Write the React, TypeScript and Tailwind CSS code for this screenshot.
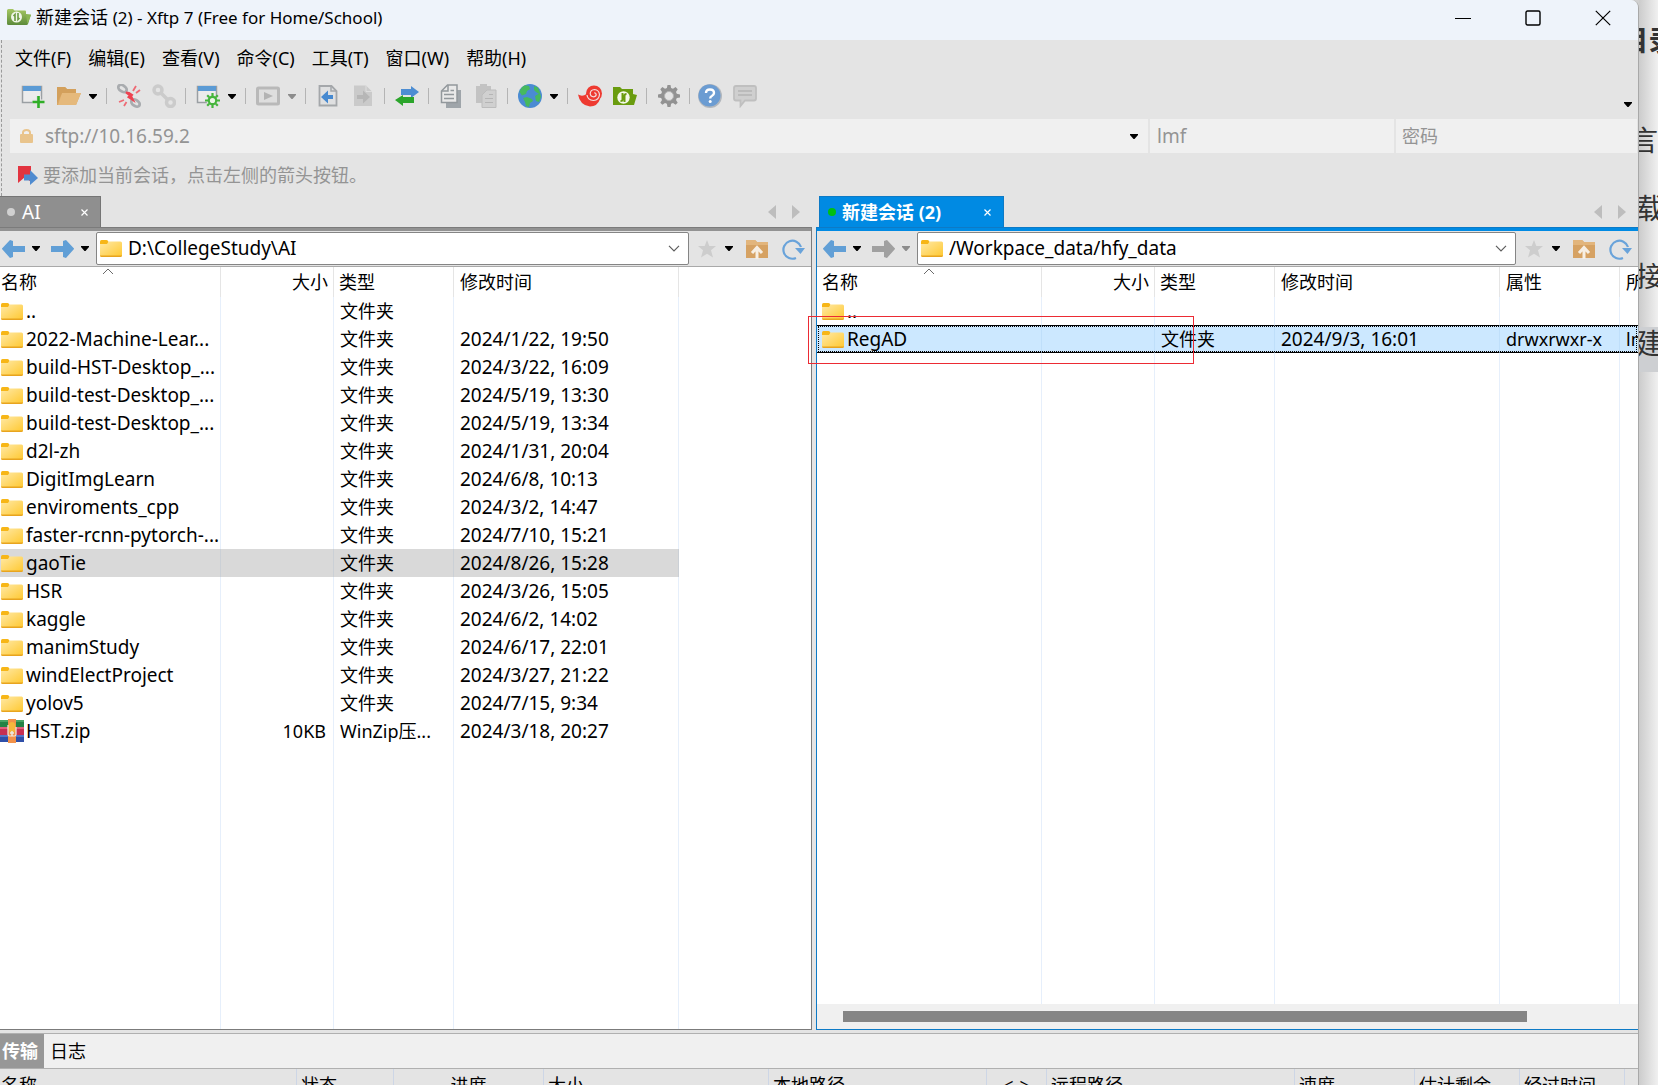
import type { ReactNode } from "react";
import clsx from "clsx";

type FileRow = {
    name: string;
    size?: string;
    type?: string;
    modified?: string;
    attr?: string;
    owner?: string;
    zip?: boolean;
    selected?: boolean;
};

const localFiles: FileRow[] = [
    { name: "..", type: "文件夹" },
    { name: "2022-Machine-Lear...", type: "文件夹", modified: "2024/1/22, 19:50" },
    { name: "build-HST-Desktop_...", type: "文件夹", modified: "2024/3/22, 16:09" },
    { name: "build-test-Desktop_...", type: "文件夹", modified: "2024/5/19, 13:30" },
    { name: "build-test-Desktop_...", type: "文件夹", modified: "2024/5/19, 13:34" },
    { name: "d2l-zh", type: "文件夹", modified: "2024/1/31, 20:04" },
    { name: "DigitImgLearn", type: "文件夹", modified: "2024/6/8, 10:13" },
    { name: "enviroments_cpp", type: "文件夹", modified: "2024/3/2, 14:47" },
    { name: "faster-rcnn-pytorch-...", type: "文件夹", modified: "2024/7/10, 15:21" },
    { name: "gaoTie", type: "文件夹", modified: "2024/8/26, 15:28", selected: true },
    { name: "HSR", type: "文件夹", modified: "2024/3/26, 15:05" },
    { name: "kaggle", type: "文件夹", modified: "2024/6/2, 14:02" },
    { name: "manimStudy", type: "文件夹", modified: "2024/6/17, 22:01" },
    { name: "windElectProject", type: "文件夹", modified: "2024/3/27, 21:22" },
    { name: "yolov5", type: "文件夹", modified: "2024/7/15, 9:34" },
    { name: "HST.zip", size: "10KB", type: "WinZip压...", modified: "2024/3/18, 20:27", zip: true },
];

const remoteFiles: FileRow[] = [
    { name: ".." },
    { name: "RegAD", type: "文件夹", modified: "2024/9/3, 16:01", attr: "drwxrwxr-x", owner: "lmf", selected: true },
];

const menus = ["文件(F)", "编辑(E)", "查看(V)", "命令(C)", "工具(T)", "窗口(W)", "帮助(H)"];

const transferColumns = [
    { label: "名称", col: "w-[297px]" },
    { label: "状态", col: "w-[97px]" },
    { label: "进度", col: "w-[150px]", center: true },
    { label: "大小", col: "w-[225px]" },
    { label: "本地路径", col: "w-[218px]" },
    { label: "<->", col: "w-[60px]", center: true },
    { label: "远程路径", col: "w-[248px]" },
    { label: "速度", col: "w-[120px]" },
    { label: "估计剩余", col: "w-[105px]" },
    { label: "经过时间", col: "w-[105px]" },
    { label: "", col: "" },
];

function Caret({ className }: { className?: string }) {
    return (
        <svg viewBox="0 0 8 5" className={clsx("h-[5px] w-2 shrink-0 fill-current", className)} aria-hidden="true">
            <path d="M0 0h8v1L4.500 5h-1L0 1z" />
        </svg>
    );
}

function FolderIcon() {
    return (
        <svg viewBox="0 0 22 17" className="h-[17px] w-[22px] shrink-0" aria-hidden="true">
            <path d="M0 1.500Q0 0 1.500 0H6.500Q8 0 8.300 1.500V5H0z" fill="#f7b617" />
            <path d="M0 4H7L8.500 1.500H20.500Q22 1.500 22 3V16H0z" fill="url(#folder-fill)" />
            <path d="M0 15.500Q0 17 1.500 17H20.500Q22 17 22 15.500z" fill="#e8a41e" />
        </svg>
    );
}

function ZipIcon() {
    return (
        <svg viewBox="0 0 24 24" className="size-6 shrink-0" aria-hidden="true">
            <path d="M0 1h24v7H0z" fill="#238245" />
            <path d="M0 1h24v2H0z" fill="#46a264" />
            <path d="M0 8h24v8H0z" fill="#c72f52" />
            <path d="M0 8h24v2H0z" fill="#e0607c" />
            <path d="M0 16h24v7H0z" fill="#2f4fa8" />
            <path d="M0 16h24v2H0z" fill="#5476c9" />
            <path d="M8 0h8v24H8z" fill="#f2924a" />
            <path d="M8 6v9.500q0 1.500 1.500 1.500h5q1.500 0 1.500-1.500V8" fill="none" stroke="#f3ece0" strokeWidth="1.200" />
            <rect x="9" y="3" width="6" height="11" rx="3" fill="#f6b73c" />
            <path d="M12 12v5M10 14h4" stroke="#e9e9e9" strokeWidth="1.500" />
        </svg>
    );
}

function ArrowIcon({ right, className }: { right?: boolean; className: string }) {
    return (
        <svg viewBox="0 0 23 18" className={clsx("h-[18px] w-[23px] fill-current", className)} aria-hidden="true">
            {right ? <path d="M0 6h12V1l3-1 8 8.500V9l-8 9-3-1v-5H0z" /> : <path d="M23 6H11V1L8 0 0 8.500V9l8 9 3-1v-5h12z" />}
        </svg>
    );
}

function ToolButton({ label, children }: { label: string; children: ReactNode }) {
    return (
        <button type="button" aria-label={label} title={label} className="size-6 shrink-0">
            <svg viewBox="0 0 24 24" className="size-6" aria-hidden="true">
                {children}
            </svg>
        </button>
    );
}

function Divider() {
    return <span className="mr-[10px] ml-[9px] h-4 w-px bg-[#b4b4b4]" />;
}

function MenuCaret({ label, disabled, tight }: { label: string; disabled?: boolean; tight?: boolean }) {
    return (
        <button
            type="button"
            aria-label={label}
            disabled={disabled}
            className={clsx("flex h-6 items-center", tight ? "ml-[7px]" : "ml-2", disabled ? "text-[#8c8c8c]" : "text-black")}
        >
            <Caret />
        </button>
    );
}

function WindowWithBar() {
    return (
        <>
            <path d="M1.500 2.500h19v16h-19z" fill="#ececec" stroke="#9a9fa3" strokeWidth="1.500" />
            <path d="M2 2h18v5H2z" fill="#5b9bd5" />
        </>
    );
}

const gearPath =
    "M10.500 1h3l.6 3 1.900.8 2.600-1.700 2.100 2.100L19 7.900l.8 1.900 3.200.7v3l-3.200.6-.8 1.900 1.700 2.700-2.100 2.100-2.600-1.800-1.900.8-.6 3.200h-3l-.6-3.200-1.900-.8-2.600 1.800-2.100-2.100L5 16l-.8-1.900L1 13.500v-3l3.200-.7L5 7.900 3.300 5.200l2.100-2.100L8 4.800 9.900 4z";

function Toolbar() {
    return (
        <div className="flex h-[43px] items-start justify-between pr-1.5">
            <div className="flex items-center pt-2 pl-[19px]">
                <ToolButton label="新建会话">
                    <WindowWithBar />
                    <path d="M17.500 12v12M11.500 18h12" stroke="#e4e4e4" strokeWidth="5" />
                    <path d="M17.500 12v12M11.500 18h12" stroke="#2fae27" strokeWidth="2.600" />
                </ToolButton>
                <span className="w-3" />
                <ToolButton label="打开">
                    <path d="M0 3h8l2 2h9v4h5l-5 12H0z" fill="#d9a866" />
                    <path d="M5 9h19l-5 12H1z" fill="#e5b97c" />
                    <path d="M0 3h8l2 2h9v4H5L0 19z" fill="#d3a05c" />
                </ToolButton>
                <MenuCaret label="打开选项" />
                <Divider />
                <ToolButton label="断开">
                    <g fill="none" stroke="#a9acaf" strokeWidth="2.800">
                        <ellipse cx="5.500" cy="4.500" rx="4.600" ry="3" transform="rotate(35 5.500 4.500)" />
                        <ellipse cx="18.500" cy="19" rx="4.600" ry="3" transform="rotate(35 18.500 19)" />
                    </g>
                    <path d="M9 8.500l4 3-1.500 1.500 4.500 3-2-4 1-1-3-2z" fill="#ee4250" stroke="#ee4250" strokeWidth="2" />
                    <path d="M16 7l3-5M19 9l4-3M7 16l-5 2M9.500 18l-2.500 4" stroke="#ee6a74" strokeWidth="1.800" />
                </ToolButton>
                <span className="w-[11px]" />
                <ToolButton label="重新连接">
                    <g fill="none" stroke="#cbcbcb" strokeWidth="3.500">
                        <circle cx="6" cy="6" r="4" />
                        <circle cx="18.500" cy="18.500" r="4" />
                        <path d="M8.500 8.500l7.500 7.500" />
                    </g>
                </ToolButton>
                <Divider />
                <ToolButton label="属性">
                    <WindowWithBar />
                    <circle cx="16.500" cy="16.500" r="6" fill="#e4e4e4" />
                    <circle cx="16.500" cy="16.500" r="3.700" fill="#eaf5e6" stroke="#45b53c" strokeWidth="2.200" />
                    <path d="M16.500 9v3M16.500 21v3M9 16.500h3M21 16.500h3M11.200 11.200l2 2M19.800 19.800l2 2M21.800 11.200l-2 2M13.200 19.800l-2 2" stroke="#45b53c" strokeWidth="2.200" />
                </ToolButton>
                <MenuCaret label="属性选项" />
                <Divider />
                <ToolButton label="运行">
                    <rect x="1.500" y="4" width="21" height="16" rx="1" fill="#dedede" stroke="#b9b9b9" strokeWidth="3" />
                    <path d="M8 8v8l9-4z" fill="#b3b3b3" />
                </ToolButton>
                <MenuCaret label="运行选项" disabled />
                <Divider />
                <ToolButton label="下载">
                    <path d="M3.500 2h12l5 5v14.500h-17z" fill="#dfe0e1" stroke="#a4a7aa" strokeWidth="1.800" />
                    <path d="M15 2v5h5" fill="none" stroke="#a4a7aa" strokeWidth="1.500" />
                    <path d="M5 13l7-6.500V11h5v4h-5v4.500z" fill="#4689d0" />
                </ToolButton>
                <span className="w-[11px]" />
                <ToolButton label="上传">
                    <path d="M3 1.500h12l6 6V22H3z" fill="#cacaca" />
                    <path d="M15 1.500v6h6" fill="none" stroke="#dedede" />
                    <path d="M19 13l-7-6.500V11H6v4h6v4.500z" fill="#b6b6b6" />
                </ToolButton>
                <Divider />
                <ToolButton label="同步">
                    <path d="M6 5h10V2l8 6-8 6v-3H6z" fill="#4d8dd2" />
                    <path d="M19 13H8v-2l-8 5 8 6v-3h11z" fill="#2ba52b" />
                </ToolButton>
                <Divider />
                <ToolButton label="复制">
                    <path d="M7 6h15v18H7z" fill="#9fa5aa" />
                    <path d="M8.500 1H18v17.500H2.500V7z" fill="#e9e9e9" stroke="#92989c" strokeWidth="1.500" />
                    <path d="M9 1v6H3M5 10.500h10M5 14.500h10M11.500 6.500H15" fill="none" stroke="#92989c" strokeWidth="1.500" />
                </ToolButton>
                <span className="w-[11px]" />
                <ToolButton label="粘贴">
                    <path d="M2 2h4V0h7v2h4v17H2z" fill="#c3c3c3" />
                    <path d="M13 6h9v17.500H8V11z" fill="#d0d0d0" stroke="#bcbcbc" />
                    <path d="M11 14.500h8M11 18.500h8M15 10.500h4" stroke="#b5b5b5" />
                </ToolButton>
                <Divider />
                <ToolButton label="语言">
                    <circle cx="12" cy="12" r="12" fill="#4a8bd3" />
                    <path d="M7 1.200 11 2l1 3-3 2-1 3-4 1.500L1.500 8Q3 3 7 1.200zM16 2l4 1.500 2 5-1 1.500-3-2-2-2zM17 12l5-3 1 4-2 5-3-1zM5 14l4-1 5 2 1 2-3 2-1 4-3-1-1-4z" fill="#46b95e" />
                </ToolButton>
                <MenuCaret label="语言选项" />
                <Divider />
                <ToolButton label="Xshell">
                    <circle cx="16" cy="9.500" r="8" fill="#ee3a31" />
                    <path d="M0 10.500q4.500 2.500 8.500-.5L22 15q-2.500 7.500-10 7.500Q2 21.500 0 10.500z" fill="#ee3a31" />
                    <path
                        d="M9 11q.5 5 6.500 5.500 5.500-.5 6-6-.5-4.500-5-5-4 .3-4.300 4 .3 3.300 3.600 3.300 2.400-.3 2.400-2.500-.4-1.600-2-1.400"
                        fill="none"
                        stroke="#f3dedd"
                        strokeWidth="1.200"
                    />
                    <path d="M21 1.500L24 0v5z" fill="#e4e4e4" />
                </ToolButton>
                <span className="w-[11px]" />
                <ToolButton label="Xftp">
                    <path d="M0 3h7l2 2h11v5l4 1-3 10H0z" fill="#6a9c0f" />
                    <circle cx="10.500" cy="13.500" r="6.200" fill="#f4f8ea" />
                    <path d="M9.500 9v6.500q0 1.500-2 1.500M11.500 18v-6.500q0-1.500 2-1.500" fill="none" stroke="#6a9c0f" strokeWidth="2" />
                </ToolButton>
                <Divider />
                <ToolButton label="选项">
                    <path d={gearPath} fill="#929292" />
                    <circle cx="12" cy="12" r="4.500" fill="#e4e4e4" stroke="#b4b4b4" />
                </ToolButton>
                <span className="mx-2 h-4 w-px bg-[#b4b4b4]" />
                <ToolButton label="帮助">
                    <circle cx="12" cy="12" r="12" fill="#b2b7bd" />
                    <circle cx="11.500" cy="11.500" r="11" fill="#6b9cd2" />
                    <path d="M8 9q0-3.500 4-3.500T16 9q0 1.800-2.200 3-1.600.8-1.600 2.500" fill="none" stroke="#fff" strokeWidth="2.400" />
                    <circle cx="12.200" cy="17.500" r="1.500" fill="#fff" />
                </ToolButton>
                <span className="w-[11px]" />
                <ToolButton label="反馈">
                    <path d="M3 2h18q2 0 2 2v10.500q0 2-2 2H12L7.500 22v-5.500H3q-2 0-2-2V4q0-2 2-2z" fill="#cfcfcf" stroke="#bfbfbf" strokeWidth="1.800" />
                    <path d="M5 7h14M5 11h14" stroke="#b5b5b5" strokeWidth="1.500" />
                </ToolButton>
            </div>
            <button type="button" aria-label="工具栏选项" className="pt-[26px]">
                <Caret />
            </button>
        </div>
    );
}

function AddressBar() {
    return (
        <form className="flex h-[34px] gap-0.5 pr-px pl-2 text-[19px] text-[#949494]">
            <div className="flex min-w-0 flex-1 items-center bg-[#f0f0f0] pr-[10px] pl-[10px]">
                <svg viewBox="0 0 13 14" className="mr-3 h-[14px] w-[13px] shrink-0" aria-hidden="true">
                    <path d="M3 6V3.500Q3 1 6.500 1T10 3.500V6" fill="none" stroke="#e9c48c" strokeWidth="2" />
                    <rect y="5" width="13" height="9" rx="1" fill="#e9c48c" />
                </svg>
                <input aria-label="主机" defaultValue="sftp://10.16.59.2" className="min-w-0 flex-1 bg-transparent outline-none" />
                <button type="button" aria-label="历史地址" className="text-black">
                    <Caret />
                </button>
            </div>
            <input aria-label="用户名" defaultValue="lmf" className="w-[244px] bg-[#f0f0f0] pl-[7px] outline-none" />
            <input aria-label="密码" type="text" placeholder="密码" className="w-[241px] bg-[#f0f0f0] pl-1.5 text-lg outline-none placeholder:text-[#949494]" />
        </form>
    );
}

function PaneNav({ path, remote }: { path: string; remote?: boolean }) {
    return (
        <div className={clsx("flex h-9 shrink-0 items-center border-b border-[#a9a9a9] bg-[#e4e4e4] pr-1.5", remote ? "pl-1.5" : "pl-0.5")}>
            <button type="button" aria-label="后退">
                <ArrowIcon className="text-[#619fd6]" />
            </button>
            <MenuCaret label="后退历史" tight />
            <button type="button" aria-label="前进" disabled={remote} className="ml-[11px]">
                <ArrowIcon right className={remote ? "text-[#a0a0a0]" : "text-[#619fd6]"} />
            </button>
            <MenuCaret label="前进历史" disabled={remote} tight />
            <div className="relative ml-[7px] flex h-[33px] min-w-0 flex-1 items-center rounded-xs border border-[#858585] bg-white pl-[3px]">
                <FolderIcon />
                <select aria-label="路径" className="h-full min-w-0 flex-1 appearance-none bg-transparent pl-1.5 text-[19px] outline-none">
                    <option>{path}</option>
                </select>
                <svg viewBox="0 0 12 7" className="pointer-events-none absolute right-2 h-[7px] w-3" aria-hidden="true">
                    <path d="M1 .8l5 5 5-5" fill="none" stroke="#5c5c5c" strokeWidth="1.200" />
                </svg>
            </div>
            <button type="button" aria-label="收藏" className="ml-2">
                <svg viewBox="0 0 20 20" className="size-5" aria-hidden="true">
                    <path d="M10 1l2.300 6H19l-5 4.300 2 7.200-6-3.800-6 3.800 2-7.200L1 7h6.700z" fill="#cdcdcd" />
                </svg>
            </button>
            <MenuCaret label="收藏夹" />
            <button type="button" aria-label="上级目录" className="ml-[13px]">
                <svg viewBox="0 0 22 20" className="h-5 w-[22px]" aria-hidden="true">
                    <path d="M0 1h9l2 2h11v16H0z" fill="#d6a263" />
                    <path d="M0 1h9l2 2h11v3H0z" fill="#e2b57c" />
                    <path d="M11 20v-9M6 14l5-5.500 5 5.500" fill="none" stroke="#f7efe4" strokeWidth="3" />
                </svg>
            </button>
            <button type="button" aria-label="刷新" className="ml-[13px]">
                <svg viewBox="0 0 24 22" className="h-[22px] w-6" aria-hidden="true">
                    <path d="M15 20A9 9 0 1 1 20 9" fill="none" stroke="#69a3da" strokeWidth="2.200" />
                    <path d="M14 10h10l-4.500 6z" fill="#69a3da" />
                </svg>
            </button>
        </div>
    );
}

function FileTable({ rows, remote }: { rows: FileRow[]; remote?: boolean }) {
    const headCell = "relative h-[30px] border-r border-[#e5e5e5] p-0 font-normal";
    const columns = remote ? 6 : 5;
    return (
        <table className="h-full w-full table-fixed border-separate border-spacing-0 text-lg leading-6 whitespace-nowrap">
            <colgroup>
                <col className={remote ? "w-[225px]" : "w-[221px]"} />
                <col className="w-[113px]" />
                <col className="w-[120px]" />
                <col className="w-[225px]" />
                {remote && <col className="w-[120px]" />}
                <col />
            </colgroup>
            <thead>
                <tr className="text-left">
                    <th className={clsx(headCell, remote ? "pl-[5px]" : "pl-px")}>
                        名称
                        <svg viewBox="0 0 12 7" className={clsx("absolute top-px left-1/2 h-[7px] w-3", remote ? "-ml-1.5" : "-ml-2")} aria-hidden="true">
                            <path d="M1 6l5-5 5 5" fill="none" stroke="#6b6b6b" />
                        </svg>
                    </th>
                    <th className={clsx(headCell, "pr-[5px] text-right")}>大小</th>
                    <th className={clsx(headCell, "pl-[5px]")}>类型</th>
                    <th className={clsx(headCell, "pl-1.5")}>修改时间</th>
                    {remote && <th className={clsx(headCell, "pl-1.5")}>属性</th>}
                    <th className="h-[30px] overflow-hidden p-0 pl-1.5 font-normal">{remote && "所有者"}</th>
                </tr>
            </thead>
            <tbody>
                {rows.map((row, i) => {
                    const focus = remote && row.selected;
                    const cell = clsx(
                        "h-7 overflow-hidden border-r p-0",
                        row.selected ? (remote ? "border-r-[#bfdffa]" : "border-r-[#cbd0d6] bg-[#d9d9d9]") : "border-r-[#e6effb]",
                        focus && "border-y border-y-black bg-[#cce8ff]"
                    );
                    return (
                        <tr key={i} className={clsx(focus && "outline-1 -outline-offset-2 outline-black outline-dotted")}>
                            <td className={cell}>
                                <div className={clsx("flex items-center text-[19px]", row.zip ? "gap-0.5" : "gap-[3px]", remote ? "pl-[5px]" : !row.zip && "pl-px")}>
                                    {row.zip ? <ZipIcon /> : <FolderIcon />}
                                    <span>{row.name}</span>
                                </div>
                            </td>
                            <td className={clsx(cell, "pr-[7px] text-right")}>{row.size}</td>
                            <td className={clsx(cell, "pl-1.5")}>{row.type}</td>
                            <td className={clsx(cell, "pl-1.5 text-[19px]")}>{row.modified}</td>
                            {remote && <td className={clsx(cell, "pl-1.5")}>{row.attr}</td>}
                            <td className={clsx("overflow-hidden p-0 pl-1.5", focus && "border-y border-black bg-[#cce8ff]")}>{row.owner}</td>
                        </tr>
                    );
                })}
                <tr aria-hidden="true">
                    {Array.from({ length: columns }, (_, i) => (
                        <td key={i} className={clsx("p-0", i < columns - 1 && "border-r border-[#e6effb]")} />
                    ))}
                </tr>
            </tbody>
        </table>
    );
}

function Pane({ title, path, rows, remote }: { title: string; path: string; rows: FileRow[]; remote?: boolean }) {
    return (
        <section className="relative flex min-h-0 min-w-0 flex-col">
            <div className="flex h-[31px] shrink-0 items-center justify-between pr-3">
                <div
                    className={clsx(
                        "flex h-full items-center border-t border-r text-white",
                        remote ? "ml-[3px] w-[185px] border-l border-[#0d7ac6] bg-[#008ae3] pr-3 pl-2" : "w-[101px] border-[#757575] bg-[#8f8f8f] pr-3 pl-[7px]"
                    )}
                >
                    <span className={clsx("size-2 rounded-full", remote ? "bg-[#00bf13]" : "bg-[#d0d0d0]")} />
                    <button type="button" className={clsx("flex-1 text-left leading-7 whitespace-nowrap", remote ? "pl-1.5 text-lg font-bold" : "pl-[7px] text-[19px]")}>
                        {title}
                    </button>
                    <button type="button" aria-label="关闭标签">
                        <svg viewBox="0 0 7 7" className="size-[7px]" aria-hidden="true">
                            <path d="M.5.5l6 6M6.500.5l-6 6" stroke="#fff" strokeWidth="1.200" />
                        </svg>
                    </button>
                </div>
                <div className="flex gap-4 text-[#bdbdbd]">
                    <button type="button" aria-label="向左滚动标签">
                        <svg viewBox="0 0 8 14" className="h-[14px] w-2 fill-current" aria-hidden="true">
                            <path d="M8 0v14L0 7z" />
                        </svg>
                    </button>
                    <button type="button" aria-label="向右滚动标签">
                        <svg viewBox="0 0 8 14" className="h-[14px] w-2 fill-current" aria-hidden="true">
                            <path d="M0 0v14l8-7z" />
                        </svg>
                    </button>
                </div>
            </div>
            <div className={clsx("flex min-h-0 flex-1 flex-col border-t border-b bg-white", remote ? "border-l border-[#0d7ac6]" : "border-r border-[#7b7b7b]")}>
                <div className={clsx("h-[3px] shrink-0", remote ? "bg-[#008ae3]" : "bg-[#929292]")} />
                <PaneNav path={path} remote={remote} />
                <div className="min-h-0 flex-1 overflow-hidden">
                    <FileTable rows={rows} remote={remote} />
                </div>
                {remote && (
                    <div className="h-[25px] shrink-0 bg-[#f0f0f0] pt-[7px] pr-[111px] pl-[26px]">
                        <div className="h-[11px] bg-[#858585]" />
                    </div>
                )}
            </div>
            {remote && <div className="pointer-events-none absolute top-[120px] -left-2 h-12 w-[386px] border border-[#ec2b34]" />}
        </section>
    );
}

function TransferPanel() {
    return (
        <section className="mt-[3px] shrink-0 border-t border-[#b0b0b0]">
            <div className="flex h-[35px] border-b border-[#b0b0b0] bg-[#f0f0f0] text-lg">
                <button type="button" className="w-11 bg-[#979797] pr-1 font-bold whitespace-nowrap text-white">传输</button>
                <button type="button" className="px-1.5">日志</button>
            </div>
            <div className="h-4 overflow-hidden">
                <table className="w-full table-fixed border-separate border-spacing-0 text-lg leading-7 whitespace-nowrap">
                    <colgroup>
                        {transferColumns.map((c, i) => (
                            <col key={i} className={c.col} />
                        ))}
                    </colgroup>
                    <thead>
                        <tr>
                            {transferColumns.map((c, i) => (
                                <th
                                    key={i}
                                    className={clsx(
                                        "h-8 p-0 font-normal",
                                        c.label && "border-r border-[#cdd6e6]",
                                        c.center ? "text-center" : i === 0 ? "pl-px text-left" : "pl-1 text-left"
                                    )}
                                >
                                    {c.label}
                                </th>
                            ))}
                        </tr>
                    </thead>
                </table>
            </div>
        </section>
    );
}

// The article that shows past the right edge of the window
function PageBehind() {
    return (
        <aside className="w-[19px] shrink-0 overflow-hidden bg-linear-to-r from-[#cccccc] to-[#f0f0f0] text-[28px] whitespace-nowrap text-[#333]">
            <div className="flex h-20 items-center justify-center font-bold">目录</div>
            <div className="mt-[26px] flex h-[68px] items-center justify-end">言</div>
            <div className="-ml-[3px] flex h-[68px] items-center">载</div>
            <div className="-ml-[3px] flex h-[68px] items-center">接</div>
            <div className="mt-[17px] h-[45px] bg-[#cdcfd2] leading-8">
                <span className="-ml-[3px]">建</span>
            </div>
        </aside>
    );
}

export default function App() {
    return (
        <div className="flex h-screen overflow-hidden bg-[#d0d0d0] font-['Noto_Sans','Noto_Sans_CJK_SC',sans-serif] text-black">
            <svg className="absolute size-0" aria-hidden="true">
                <linearGradient id="folder-fill" x1="0" y1="0" x2="1" y2="1">
                    <stop offset="0" stopColor="#ffe9a6" />
                    <stop offset="1" stopColor="#ffc933" />
                </linearGradient>
                <linearGradient id="logo-fill" x1="0" y1="0" x2="0" y2="1">
                    <stop offset="0" stopColor="#a5c763" />
                    <stop offset="1" stopColor="#5c8a3a" />
                </linearGradient>
            </svg>
            <main className="flex min-w-0 flex-1 flex-col overflow-hidden rounded-tr-lg border-r border-[#a8a8a8] bg-[#e4e4e4]">
                <header className="flex h-10 shrink-0 items-center justify-between bg-[#eef3fa]">
                    <div className="flex items-center gap-[5px] pb-1.5 pl-[7px]">
                        <svg viewBox="0 0 24 16" className="h-4 w-6" aria-hidden="true">
                            <path d="M0 1.500Q0 0 1.500 0H6l1.500 1.500H18q1 0 1 1V5l5 .5L21 15q-.5 1-1.500 1H1.500Q0 16 0 14.500z" fill="url(#logo-fill)" />
                            <path d="M19 6h5l-3.500 9z" fill="#8ab653" />
                            <circle cx="9.500" cy="8" r="5.500" fill="#f1f6e8" />
                            <path d="M8 12V5.500L6.500 7M11 4v6.500L12.500 9" fill="none" stroke="#6d9b42" strokeWidth="1.600" />
                        </svg>
                        <h1 className="text-lg leading-7">
                            新建会话 <span className="text-[17px]">(2) - Xftp 7 (Free for Home/School)</span>
                        </h1>
                    </div>
                    <div className="flex items-center gap-[54px] pr-[27px] pb-[5px]">
                        <button type="button" aria-label="最小化">
                            <svg viewBox="0 0 16 16" className="size-4" aria-hidden="true">
                                <path d="M0 8.500h16" stroke="#000" />
                            </svg>
                        </button>
                        <button type="button" aria-label="最大化">
                            <svg viewBox="0 0 16 16" className="size-4" aria-hidden="true">
                                <rect x="1" y="1" width="14" height="14" rx="1.500" fill="none" stroke="#000" strokeWidth="1.400" />
                            </svg>
                        </button>
                        <button type="button" aria-label="关闭">
                            <svg viewBox="0 0 16 16" className="size-4" aria-hidden="true">
                                <path d="M.8.8l14.400 14.400M15.200.8.8 15.200" stroke="#000" strokeWidth="1.200" />
                            </svg>
                        </button>
                    </div>
                </header>
                <div className="ml-px shrink-0 border-l border-dashed border-[#9a9a9a]">
                    <nav className="flex h-9 items-center gap-[17px] pl-[13px] text-lg leading-7">
                        {menus.map((m) => (
                            <button key={m} type="button" className="whitespace-nowrap">{m}</button>
                        ))}
                    </nav>
                    <Toolbar />
                    <AddressBar />
                    <div className="flex h-[43px] items-center gap-[5px] pl-4 text-lg text-[#949494]">
                        <button type="button" aria-label="添加当前会话">
                            <svg viewBox="0 0 20 20" className="size-5" aria-hidden="true">
                                <path d="M0 1h13v16l-6-5-7 6z" fill="#e23440" />
                                <path d="M6 9.500h6V5l8 8-8 7v-4.500H6z" fill="#4f8bd0" />
                            </svg>
                        </button>
                        <p>要添加当前会话，点击左侧的箭头按钮。</p>
                    </div>
                </div>
                <div className="grid min-h-0 flex-1 grid-cols-[minmax(0,812fr)_minmax(0,822fr)] grid-rows-[minmax(0,1fr)] gap-1">
                    <Pane title="AI" path="D:\CollegeStudy\AI" rows={localFiles} />
                    <Pane title="新建会话 (2)" path="/Workpace_data/hfy_data" rows={remoteFiles} remote />
                </div>
                <TransferPanel />
            </main>
            <PageBehind />
        </div>
    );
}
